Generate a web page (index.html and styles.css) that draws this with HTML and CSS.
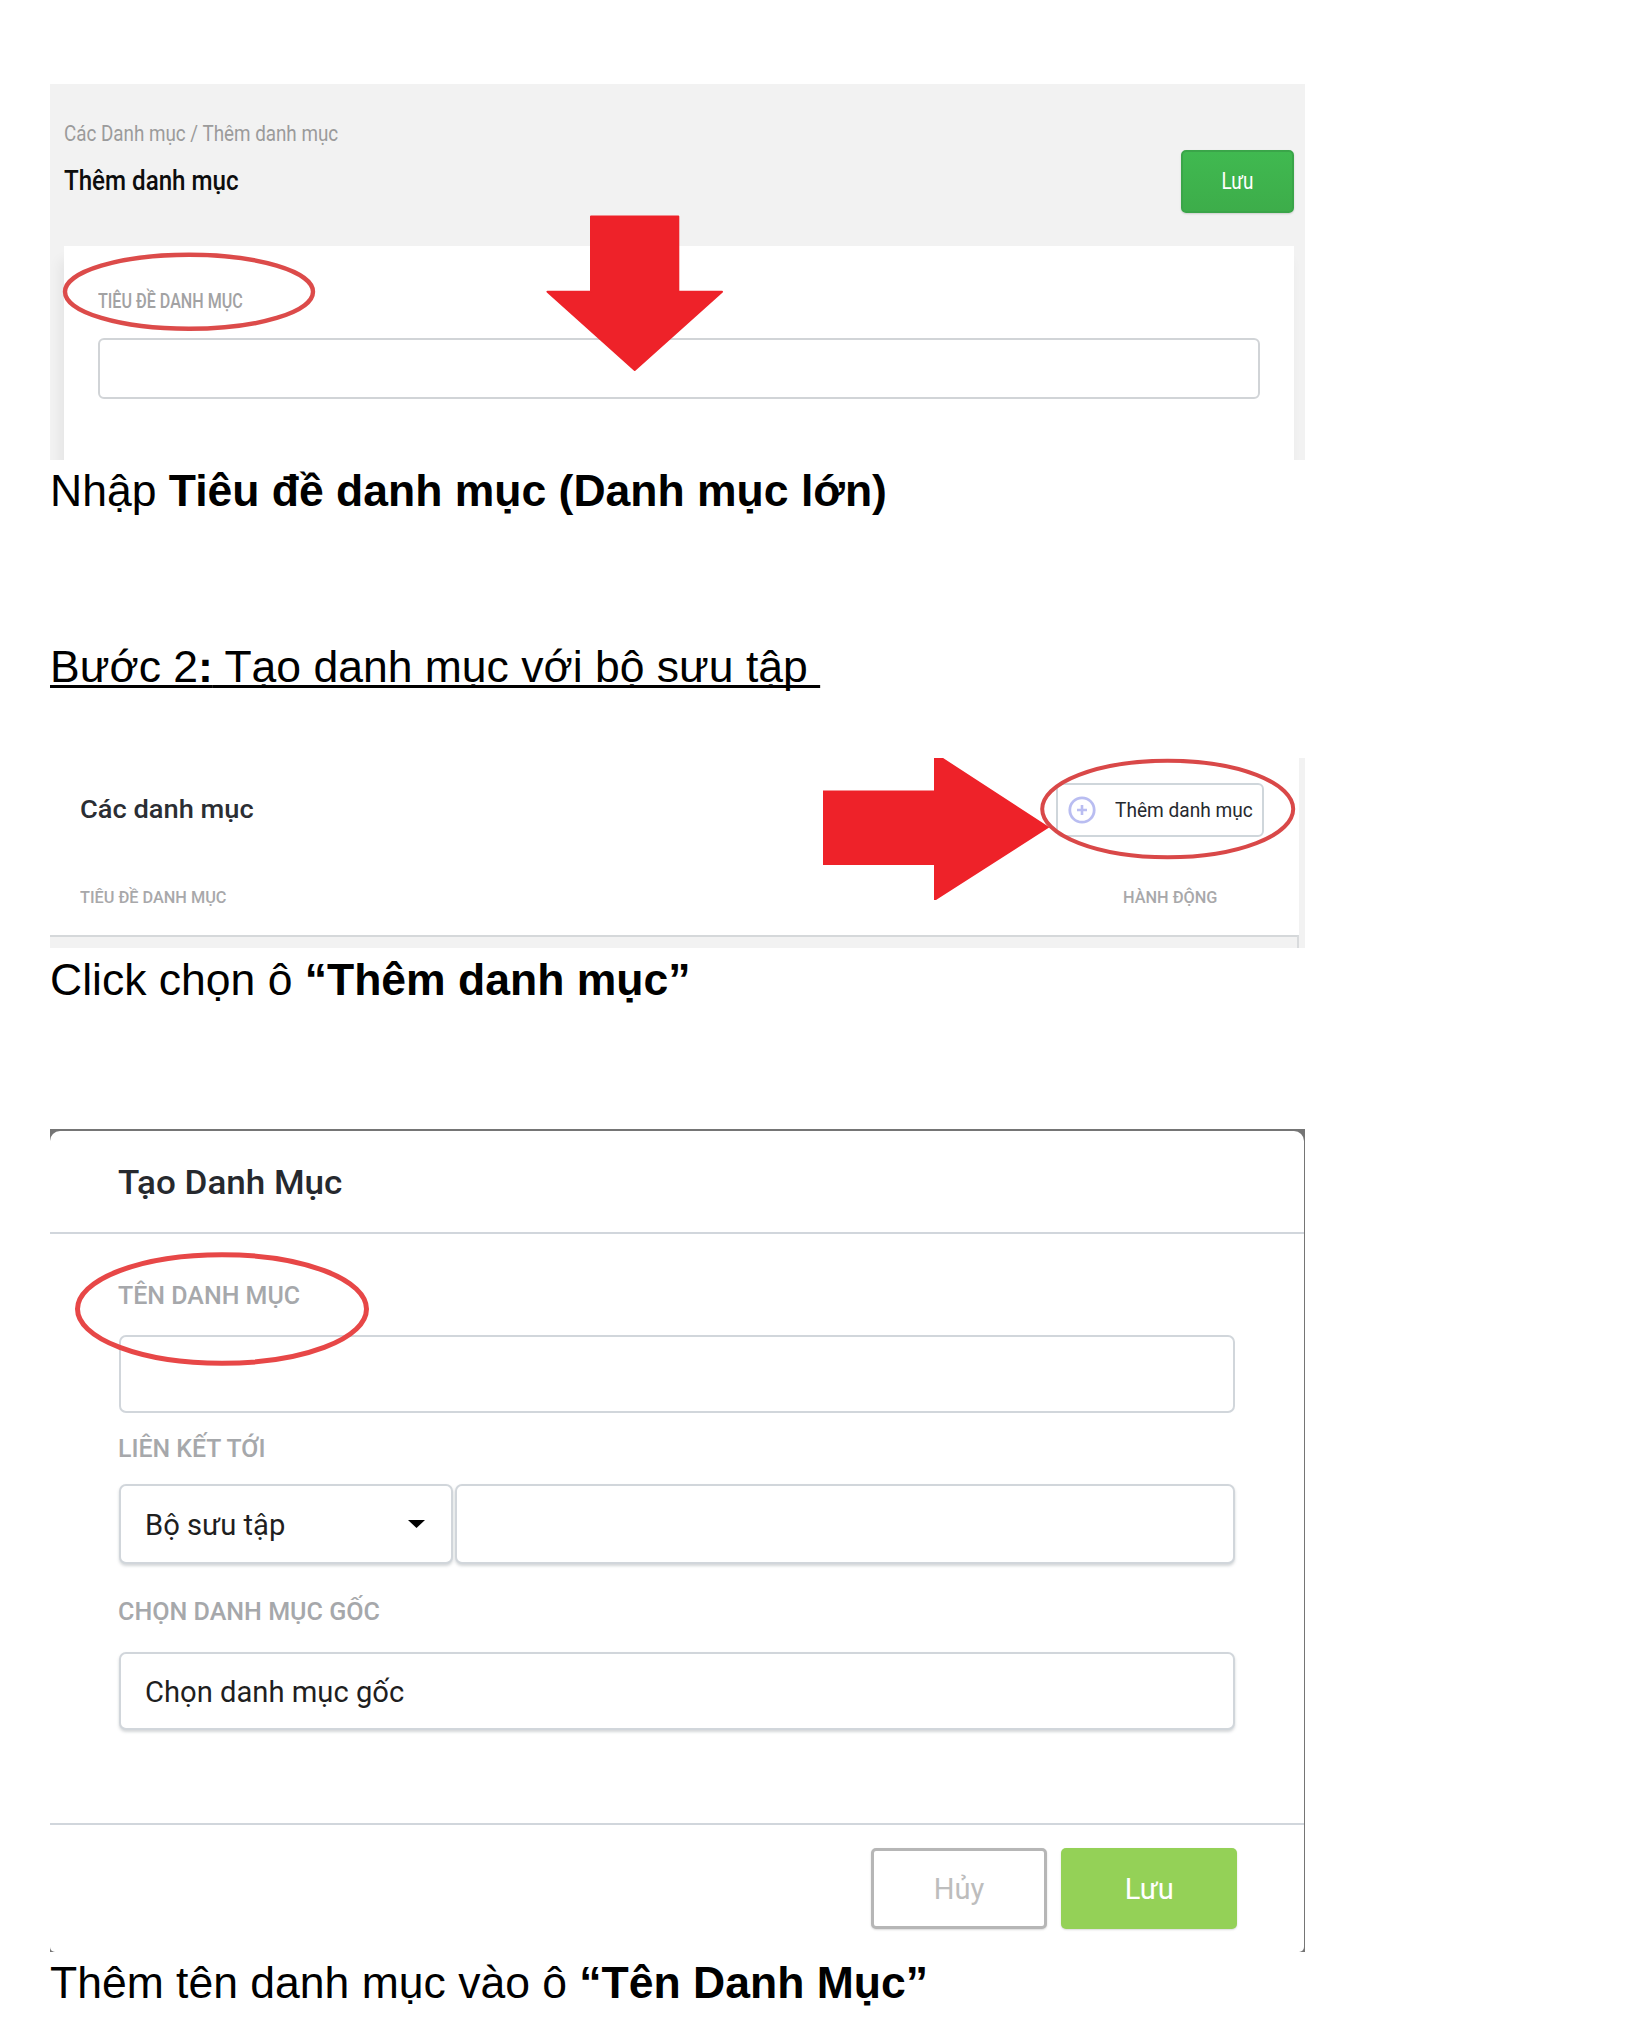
FILE: index.html
```html
<!DOCTYPE html>
<html lang="vi">
<head>
<meta charset="utf-8">
<title>Hướng dẫn tạo danh mục</title>
<link rel="stylesheet" href="styles.css">
</head>
<body>
<main class="doc">
  <section class="shot shot-add">
    <header class="add-head">
      <div class="add-titles">
        <div class="crumb"><span class="t">Các Danh mục / Thêm danh mục</span></div>
        <h2 class="add-title"><span class="t">Thêm danh mục</span></h2>
      </div>
      <button class="btn-save"><span class="t">Lưu</span></button>
    </header>
    <div class="add-card">
      <div class="add-label"><span class="t">TIÊU ĐỀ DANH MỤC</span></div>
      <div class="add-input"></div>
    </div>
    <svg class="marks" width="1255" height="376" viewBox="50 84 1255 376">
      <ellipse cx="189" cy="291.800" rx="124" ry="37" fill="none" stroke="#dc4b4a" stroke-width="4.400"/>
      <path d="M591 216.500H678.300V291.700H722L634.700 370L547.500 291.700H591Z" fill="#ee2229" stroke="#ee2229" stroke-width="2" stroke-linejoin="round"/>
    </svg>
  </section>
  <p class="caption">Nhập <b>Tiêu đề danh mục (Danh mục lớn)</b></p>

  <p class="step"><span class="step-text">Bước 2<b>:</b> Tạo danh mục với bộ sưu tập&nbsp;</span></p>

  <section class="shot shot-list">
    <div class="list-panel">
      <div class="list-head">
        <h2 class="list-title"><span class="t">Các danh mục</span></h2>
        <button class="btn-add">
          <svg width="28" height="28" viewBox="0 0 28 28" fill="none" stroke="#b9bdf1"><circle cx="14" cy="14" r="12.200" stroke-width="2.800"/><path d="M14 9v10M9 14h10" stroke-width="2.600"/></svg>
          <span class="t">Thêm danh mục</span>
        </button>
      </div>
      <div class="list-cols">
        <span class="t">TIÊU ĐỀ DANH MỤC</span>
        <span class="col-act"><span class="t">HÀNH ĐỘNG</span></span>
      </div>
      <div class="list-row"></div>
    </div>
    <svg class="marks" width="1255" height="190" viewBox="50 758 1255 190">
      <path d="M823 790.500H934V750L940 756L1049.500 827.300L936 900H934V865H823Z" fill="#ee2229"/>
      <ellipse cx="1167.700" cy="809" rx="125.500" ry="48.300" fill="none" stroke="#d94848" stroke-width="4"/>
    </svg>
  </section>
  <p class="caption caption-click">Click chọn ô <b>“Thêm danh mục”</b></p>

  <section class="shot shot-modal">
    <div class="modal">
      <h2 class="modal-title"><span class="t">Tạo Danh Mục</span></h2>
      <div class="modal-body">
        <div class="field-label label-name"><span class="t">TÊN DANH MỤC</span></div>
        <div class="field field-name"></div>
        <div class="field-label label-link"><span class="t">LIÊN KẾT TỚI</span></div>
        <div class="field-row">
          <div class="field raised field-type"><span class="t">Bộ sưu tập</span>
            <svg width="17" height="8" viewBox="0 0 17 8"><path d="M0 0H17L8.500 8Z"/></svg></div>
          <div class="field raised field-target"></div>
        </div>
        <div class="field-label label-root"><span class="t">CHỌN DANH MỤC GỐC</span></div>
        <div class="field raised field-root"><span class="t">Chọn danh mục gốc</span></div>
      </div>
      <div class="modal-foot">
        <button class="btn-cancel"><span class="t">Hủy</span></button>
        <button class="btn-ok"><span class="t">Lưu</span></button>
      </div>
    </div>
    <svg class="marks" width="1255" height="823" viewBox="50 1129 1255 823">
      <ellipse cx="222" cy="1309" rx="144.500" ry="54.300" fill="none" stroke="#e74747" stroke-width="5"/>
    </svg>
  </section>
  <p class="caption">Thêm tên danh mục vào ô <b>“Tên Danh Mục”</b></p>
</main>
</body>
</html>
```
FILE: styles.css
```css
* { box-sizing: border-box; }
body { margin: 0; background: #fff; font-family: Roboto, sans-serif; color: #000; }
h2, p { margin: 0; font-weight: 500; }
button { font-family: inherit; padding: 0; border: 0; }
.doc { width: 1305px; height: 2021px; padding: 84px 0 0 50px; overflow: hidden; display: flex; flex-direction: column; }
.t { display: inline-block; white-space: nowrap; transform-origin: 0 50%; }
.shot { position: relative; overflow: hidden; flex: none; }
.marks { position: absolute; left: 0; top: 0; }

.caption, .step { font: 400 44.5px/50px "Liberation Sans", sans-serif; flex: none; height: 50px; white-space: nowrap; }
.caption { margin-top: 6px; }
.caption-click { margin-top: 7px; }
.step { margin: 126px 0 66px; }
.step-text { text-decoration: underline; text-decoration-thickness: 3px; text-underline-offset: 3px; text-decoration-skip-ink: none; }

/* add-category screen */
.shot-add { height: 376px; background: #f2f2f2; }
.add-head { display: flex; justify-content: space-between; height: 162px; padding: 0 11px 0 14px; }
.add-titles { padding-top: 35px; display: flex; flex-direction: column; gap: 14px; }
.crumb { font-size: 22px; line-height: 30px; color: #9b9b9b; }
.crumb .t { transform: scaleX(.855); }
.add-title { font-size: 28px; line-height: 36px; color: #0d0d0d; }
.add-title .t { transform: scaleX(.862); }
.btn-save { margin-top: 66px; width: 113px; height: 63px; border-radius: 5px; border: 2px solid #3aa549; background: linear-gradient(#40b950, #3dad4a); color: #fff; font-size: 23px; box-shadow: 0 1px 2px rgba(0,0,0,.15); }
.btn-save .t { transform-origin: 50% 50%; transform: scaleX(.82); }
.add-card { margin: 0 11px 0 14px; height: 214px; padding: 43px 34px 0; background: #fff; box-shadow: -4px 14px 12px rgba(0,0,0,.06); }
.add-label { font-size: 20.5px; line-height: 24px; font-weight: 500; color: #a2a2a3; }
.add-label .t { transform: scaleX(.785); }
.add-input { margin-top: 25px; height: 61px; border: 2px solid #d1d4d7; border-radius: 6px; }

/* category list screen */
.shot-list { height: 190px; background: #f2f2f2; }
.list-panel { width: 1249px; height: 190px; background: #fff; display: flex; flex-direction: column; }
.list-head { display: flex; justify-content: space-between; align-items: flex-start; padding: 25px 35px 0 30px; height: 127px; }
.list-title { margin-top: 10px; font-size: 26.5px; line-height: 32px; color: #2b2e33; }
.list-title .t { transform: scaleX(1.028); }
.btn-add { width: 208px; height: 54px; border: 2px solid #cfd6db; border-radius: 6px; background: #fff; display: flex; align-items: center; gap: 19px; padding-left: 10px; font-size: 19.5px; color: #26292e; }
.btn-add svg { flex: none; }
.btn-add .t { transform: scaleX(.979); padding-top: 1px; }
.list-cols { display: flex; justify-content: space-between; padding: 0 30px; height: 50px; font-size: 17.3px; line-height: 24px; font-weight: 500; color: #a8a8aa; }
.list-cols .t { transform: scaleX(.942); }
.col-act { width: 146px; }
.list-row { height: 13px; border-top: 2px solid #d5d8da; border-right: 2px solid #d9dbdd; background: #f2f2f2; }

/* create-category dialog */
.shot-modal { margin-top: 124px; height: 823px; background: #757575; }
.modal { margin-top: 2px; width: 1254px; height: 821px; background: #fff; border-radius: 10px 10px 5px 5px; display: flex; flex-direction: column; }
.modal-title { height: 103px; flex: none; padding: 29px 68px 0; border-bottom: 2px solid #d1d6dc; font-size: 34px; line-height: 44px; color: #26292e; }
.modal-title .t { transform: scaleX(1.03); }
.modal-body { padding: 45px 69px 0 68.500px; height: 589px; flex: none; }
.field-label { margin-left: -1px; font-size: 25.7px; line-height: 32px; font-weight: 500; color: #a6a8ab; }
.label-name .t { transform: scaleX(.973); }
.label-link .t { transform: scaleX(.967); }
.label-root .t { transform: scaleX(.977); }
.field { height: 78px; border: 2px solid #d1d6db; border-radius: 7px; background: #fff; display: flex; align-items: center; padding-left: 24px; font-size: 29px; color: #1f1f1f; }
.field .t { padding-top: 2px; transform: scaleX(1.006); }
.raised { box-shadow: 0 2px 3px rgba(100,110,120,.28); }
.field-name { margin: 24px 0 19px; }
.field-row { display: flex; gap: 2px; margin: 20px 0 31px; }
.field-row .field { height: 80px; }
.field-row .field-type { width: 334px; justify-content: space-between; padding-right: 26px; }
.field-target { flex: 1; }
.field-root { margin-top: 25px; }
.modal-foot { border-top: 2px solid #d1d6dc; flex: 1; display: flex; justify-content: flex-end; gap: 14px; padding: 23px 67px 0 0; }
.modal-foot button { width: 176px; height: 81px; font-size: 30px; border-radius: 5px; }
.modal-foot .t { transform-origin: 50% 50%; transform: scaleX(.97); }
.btn-cancel { background: #fff; border: 3px solid #b6b6b6; color: #bdbdbd; box-shadow: 0 1px 2px rgba(0,0,0,.15); }
.btn-ok { background: #94d157; color: #fff; box-shadow: 0 1px 2px rgba(0,0,0,.15); }
```
